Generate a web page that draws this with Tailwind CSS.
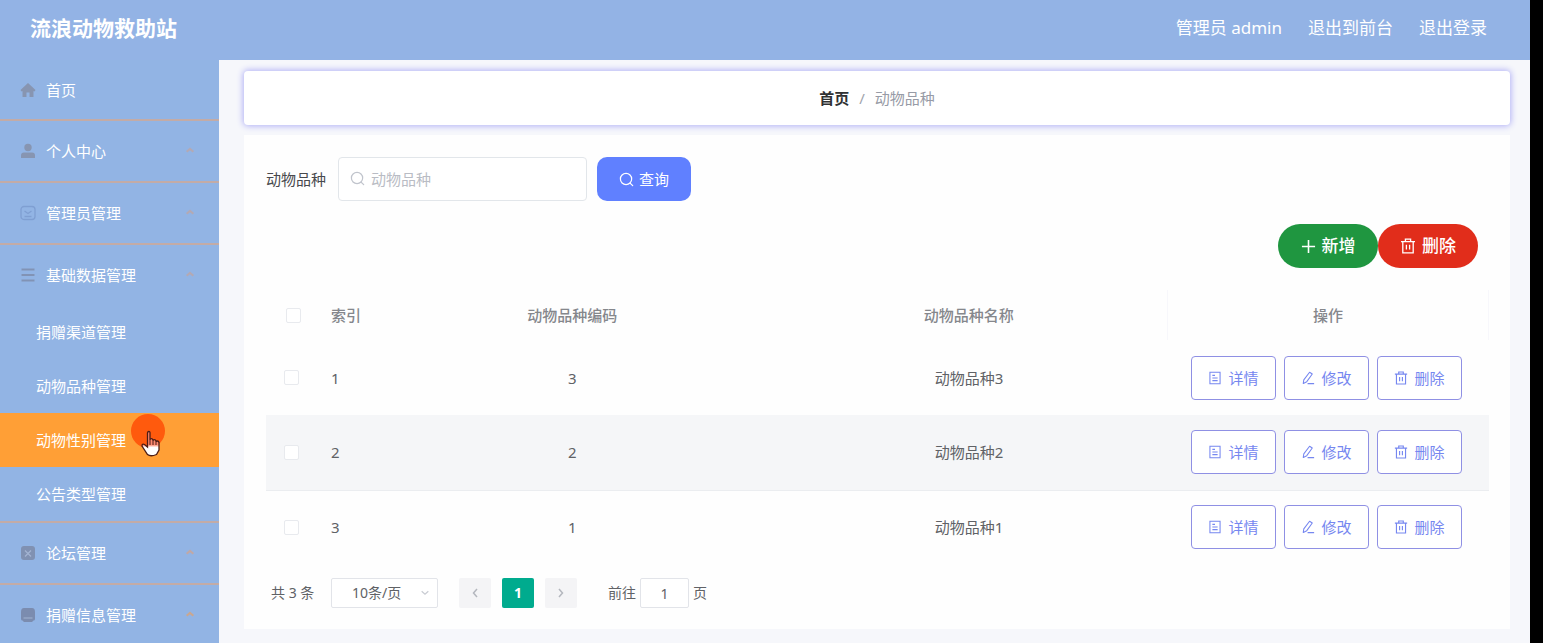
<!DOCTYPE html>
<html lang="zh-CN">
<head>
<meta charset="utf-8">
<title>流浪动物救助站</title>
<meta name="viewport" content="width=device-width, initial-scale=1">
<script src="https://cdn.jsdelivr.net/npm/@tailwindcss/browser@4"></script>
</head>
<body class="flex h-screen overflow-hidden bg-black pr-[13px] font-['Noto_Sans','Noto_Sans_CJK_SC',sans-serif] text-[15px] leading-6 text-[#606266]">

<svg class="hidden" aria-hidden="true">
  <symbol id="search" viewBox="0 0 16 16"><circle cx="7.5" cy="7.5" r="6" fill="none" stroke="currentColor" stroke-width="1.3"/><path d="M11.8 11.8 14.6 14.6" stroke="currentColor" stroke-width="1.3" stroke-linecap="round"/></symbol>
  <symbol id="plus" viewBox="0 0 16 16"><path d="M8 1v14M1 8h14" stroke="currentColor" stroke-width="1.7"/></symbol>
  <symbol id="trash" viewBox="0 0 16 16"><path d="M1 3.6h14M5.4 3.4V1.2h5.2v2.2M2.8 3.8v11h10.4v-11M6.4 6.8v4.8M9.6 6.8v4.8" fill="none" stroke="currentColor" stroke-width="1.3"/></symbol>
  <symbol id="doc" viewBox="0 0 16 16"><path d="M2.2 1.4h11.6v13.2H2.2zM5 5h3M5 8h6M5 11h6" fill="none" stroke="currentColor" stroke-width="1.2"/></symbol>
  <symbol id="edit" viewBox="0 0 16 16"><path d="M9.8 1.4 12.9 3.4 6.6 12.2 2.6 14.2 3.2 10.2zM7.5 14.4h7.5" fill="none" stroke="currentColor" stroke-width="1.2" stroke-linejoin="round"/></symbol>
  <symbol id="up" viewBox="0 0 12 12"><path d="M2 8 6 4.5 10 8" fill="none" stroke="currentColor" stroke-width="1.5"/></symbol>
  <symbol id="caret" viewBox="0 0 12 12"><path d="M2 7 6 3.500 10 7" fill="none" stroke="currentColor" stroke-width="2.500"/></symbol>
</svg>

<div class="flex min-w-0 flex-1 flex-col bg-[#f6f7fb]">
  <header class="flex h-[60px] shrink-0 items-center justify-between bg-[#93b3e5] pr-[43px] pb-1 pl-[30px] text-white">
    <h1 class="text-[21px] font-bold">流浪动物救助站</h1>
    <div class="flex items-center gap-[26px] text-[17px]">
      <span>管理员 admin</span>
      <a href="#">退出到前台</a>
      <a href="#">退出登录</a>
    </div>
  </header>

  <div class="flex min-h-0 flex-1">
    <nav class="w-[219px] shrink-0 overflow-hidden bg-[#92b4e4] text-white" aria-label="主菜单">
      <ul>
        <li class="border-b-2 border-[#c3aba6]">
          <a href="#" class="flex h-[59px] items-center gap-[10px] pl-5">
            <svg class="size-4 text-[#8795b1]" viewBox="0 0 16 16" fill="currentColor"><path d="M8 1 .5 8l1 1.500L2.500 9V15h4v-4.500h3V15h4V9l1 .5 1-1.500z"/></svg>首页</a>
        </li>
        <li class="border-b-2 border-[#c3aba6]">
          <a href="#" class="flex h-[60px] items-center gap-[10px] pl-5">
            <svg class="size-4 text-[#8795b1]" viewBox="0 0 16 16" fill="currentColor"><circle cx="8" cy="4.500" r="3.700"/><path d="M1 15v-2.500Q1 9.500 4 9.500h8q3 0 3 3V15z"/></svg>个人中心
            <svg class="mr-6 ml-auto size-[10px] text-[#b3a9b4]"><use href="#caret"/></svg></a>
        </li>
        <li class="border-b-2 border-[#c3aba6]">
          <a href="#" class="flex h-[60px] items-center gap-[10px] pl-5">
            <svg class="size-4 text-[#7f9fd2]" viewBox="0 0 16 16" fill="none" stroke="currentColor" stroke-width="1.300"><rect x="1" y="1.500" width="14" height="13" rx="3"/><path d="m4.500 6 3.500 2.500L11.500 6M4.500 11.500h7"/></svg>管理员管理
            <svg class="mr-6 ml-auto size-[10px] text-[#b3a9b4]"><use href="#caret"/></svg></a>
        </li>
        <li class="border-b-2 border-[#c3aba6]">
          <a href="#" class="flex h-[60px] items-center gap-[10px] pl-5">
            <svg class="size-4 text-[#8193b5]" viewBox="0 0 16 16" stroke="currentColor" stroke-width="1.800"><path d="M1.500 2.500h13M1.500 8h13M1.500 13.500h13"/></svg>基础数据管理
            <svg class="mr-6 ml-auto size-[10px] text-[#b3a9b4]"><use href="#caret"/></svg></a>
          <ul>
            <li><a href="#" class="flex h-[54px] items-center pl-9">捐赠渠道管理</a></li>
            <li><a href="#" class="flex h-[54px] items-center pl-9">动物品种管理</a></li>
            <li class="relative"><a href="#" class="flex h-[54px] items-center bg-[#ff9f36] pl-9">动物性别管理</a>
              <span class="absolute top-px left-[131px] size-[34px] rounded-full bg-[#ff5a0d]"></span>
              <svg class="absolute top-[17px] left-[140px] h-7 w-[22px]" viewBox="0 0 22 28"><defs><linearGradient id="skin" x1="0" y1="0" x2="0" y2="1"><stop offset=".55" stop-color="#ff8a70"/><stop offset=".65" stop-color="#fff"/></linearGradient></defs><path d="M7.500 14V3q0-1.500 1.300-1.500T10 3v7q0-1.300 1.300-1.300T13 10v1q0-1.300 1.300-1.300T16 11v1q0-1 1.300-1T19 12.500V20l-2.500 4.500q-6 2.500-9 0L2 16q0-2.500 2.500-1.500L7.500 17z" fill="url(#skin)" stroke="#4c1d16" stroke-width="1.300"/><path d="M10 10v5M13 11v4M16 12v3" stroke="#4c1d16"/></svg>
            </li>
            <li><a href="#" class="flex h-[54px] items-center pl-9">公告类型管理</a></li>
          </ul>
        </li>
        <li class="border-b-2 border-[#c3aba6]">
          <a href="#" class="flex h-[60px] items-center gap-[10px] pl-5">
            <svg class="size-4" viewBox="0 0 16 16"><rect x="1" y="1" width="14" height="14" rx="3" fill="#8091b2"/><path d="m5 5.500 6 6M11 5.500l-6 6" stroke="#a3b4d2" stroke-width="1.200"/></svg>论坛管理
            <svg class="mr-6 ml-auto size-[10px] text-[#c0a8a6]"><use href="#caret"/></svg></a>
        </li>
        <li class="border-b-2 border-[#c3aba6]">
          <a href="#" class="flex h-[60px] items-center gap-[10px] pl-5">
            <svg class="size-4" viewBox="0 0 16 16"><path d="M4 1h8q3 0 3 4v7q0 1.500-1.500 1.500L12 15H4l-1.500-1.500Q1 13.500 1 12V5q0-4 3-4z" fill="#7b8caf"/><path d="M3.500 11h9" stroke="#a3b4d2"/></svg>捐赠信息管理
            <svg class="mr-6 ml-auto size-[10px] text-[#c9a791]"><use href="#caret"/></svg></a>
        </li>
      </ul>
    </nav>

    <main class="flex min-w-0 flex-1 flex-col pt-[11px] pr-5 pb-[14px] pl-[25px]">
      <nav class="flex h-[54px] shrink-0 items-center justify-center gap-[10px] rounded-sm bg-white shadow-[0_0_6px_1px_#b0b0f6]" aria-label="面包屑">
        <a href="#" class="font-bold text-[#303133]">首页</a>
        <span class="text-[#a0a4ac]">/</span>
        <span class="text-[#979ba6]">动物品种</span>
      </nav>

      <section class="mt-[10px] flex flex-1 flex-col bg-[#fefefe] pt-[22px] pr-[21px] pl-[22px]">
        <form class="flex items-center">
          <label for="kind" class="mr-3 text-[#48494d]">动物品种</label>
          <div class="relative mr-[10px]">
            <input id="kind" type="text" placeholder="动物品种" class="h-11 w-[249px] rounded-sm border border-[#e2e6ea] bg-white pl-8 placeholder:text-[#b9bcc4]">
            <svg class="absolute top-[14px] left-3 size-[15px] text-[#c0c4cc]"><use href="#search"/></svg>
          </div>
          <button type="button" class="flex h-11 w-[94px] items-center justify-center gap-[5px] rounded-[10px] bg-[#6080ff] text-white"><svg class="size-[15px]"><use href="#search"/></svg>查询</button>
        </form>

        <div class="mt-[23px] flex justify-end pr-[11px] text-[17px] font-medium text-white">
          <button type="button" class="flex h-11 w-[100px] items-center justify-center gap-[6px] rounded-full bg-[#1f9640]"><svg class="size-[15px]"><use href="#plus"/></svg>新增</button>
          <button type="button" class="flex h-11 w-[100px] items-center justify-center gap-[6px] rounded-full bg-[#e12d1b]"><svg class="size-4"><use href="#trash"/></svg>删除</button>
        </div>

        <table class="mt-[22px] w-full table-fixed">
          <colgroup><col class="w-[55px]"><col class="w-[53px]"><col><col><col class="w-[321px]"></colgroup>
          <thead>
            <tr class="h-[50px] text-[#85878c]">
              <th class="pl-[20px] text-left"><input type="checkbox" aria-label="全选" class="block size-[15px] appearance-none rounded-xs border border-[#e8eaee] bg-white"></th>
              <th class="pl-[10px] text-left font-medium whitespace-nowrap">索引</th>
              <th class="font-medium">动物品种编码</th>
              <th class="font-medium">动物品种名称</th>
              <th class="border-x border-[#f7f7fb] font-medium">操作</th>
            </tr>
          </thead>
          <tbody class="text-center">
            <tr class="h-[75px]">
              <td class="pl-[18px]"><input type="checkbox" aria-label="选择 1" class="block size-[15px] appearance-none rounded-xs border border-[#e8eaee] bg-white"></td>
              <td class="pl-[10px] text-left">1</td><td>3</td><td>动物品种3</td>
              <td class="pr-[3px]"><div class="flex justify-center gap-2 text-[#7687f0]">
                <button type="button" class="flex h-11 w-[85px] items-center justify-center gap-[6px] rounded border border-[#8f90e4] bg-white"><svg class="size-[14px]"><use href="#doc"/></svg>详情</button>
                <button type="button" class="flex h-11 w-[85px] items-center justify-center gap-[6px] rounded border border-[#8f90e4] bg-white"><svg class="size-[14px]"><use href="#edit"/></svg>修改</button>
                <button type="button" class="flex h-11 w-[85px] items-center justify-center gap-[6px] rounded border border-[#8f90e4] bg-white"><svg class="size-[14px]"><use href="#trash"/></svg>删除</button>
              </div></td>
            </tr>
            <tr class="h-[75px] border-b border-[#ebedf0] bg-[#f5f6f8]">
              <td class="pl-[18px]"><input type="checkbox" aria-label="选择 2" class="block size-[15px] appearance-none rounded-xs border border-[#e8eaee] bg-white"></td>
              <td class="pl-[10px] text-left">2</td><td>2</td><td>动物品种2</td>
              <td class="pr-[3px]"><div class="flex justify-center gap-2 text-[#7687f0]">
                <button type="button" class="flex h-11 w-[85px] items-center justify-center gap-[6px] rounded border border-[#8f90e4] bg-white"><svg class="size-[14px]"><use href="#doc"/></svg>详情</button>
                <button type="button" class="flex h-11 w-[85px] items-center justify-center gap-[6px] rounded border border-[#8f90e4] bg-white"><svg class="size-[14px]"><use href="#edit"/></svg>修改</button>
                <button type="button" class="flex h-11 w-[85px] items-center justify-center gap-[6px] rounded border border-[#8f90e4] bg-white"><svg class="size-[14px]"><use href="#trash"/></svg>删除</button>
              </div></td>
            </tr>
            <tr class="h-[74px]">
              <td class="pl-[18px]"><input type="checkbox" aria-label="选择 3" class="block size-[15px] appearance-none rounded-xs border border-[#e8eaee] bg-white"></td>
              <td class="pl-[10px] text-left">3</td><td>1</td><td>动物品种1</td>
              <td class="pr-[3px]"><div class="flex justify-center gap-2 text-[#7687f0]">
                <button type="button" class="flex h-11 w-[85px] items-center justify-center gap-[6px] rounded border border-[#8f90e4] bg-white"><svg class="size-[14px]"><use href="#doc"/></svg>详情</button>
                <button type="button" class="flex h-11 w-[85px] items-center justify-center gap-[6px] rounded border border-[#8f90e4] bg-white"><svg class="size-[14px]"><use href="#edit"/></svg>修改</button>
                <button type="button" class="flex h-11 w-[85px] items-center justify-center gap-[6px] rounded border border-[#8f90e4] bg-white"><svg class="size-[14px]"><use href="#trash"/></svg>删除</button>
              </div></td>
            </tr>
          </tbody>
        </table>

        <div class="mt-[14px] flex items-center pl-[5px] text-[14px]">
          <span class="w-[60px]">共 3 条</span>
          <div class="relative mr-[21px]">
            <select aria-label="每页条数" class="h-[30px] w-[107px] appearance-none rounded-xs border border-[#e2e4e9] bg-white pl-5"><option>10条/页</option></select>
            <svg class="pointer-events-none absolute top-[10px] right-2 size-[10px] rotate-180 text-[#c9ccd3]"><use href="#up"/></svg>
          </div>
          <button type="button" aria-label="上一页" class="mr-[11px] flex h-[30px] w-8 items-center justify-center rounded-xs bg-[#f4f4f6] text-[#b4b7be]"><svg class="size-3 -rotate-90"><use href="#up"/></svg></button>
          <button type="button" class="mr-[11px] h-[30px] w-8 rounded-xs bg-[#00ab8e] font-bold text-white">1</button>
          <button type="button" aria-label="下一页" class="mr-[31px] flex h-[30px] w-8 items-center justify-center rounded-xs bg-[#f4f4f6] text-[#b4b7be]"><svg class="size-3 rotate-90"><use href="#up"/></svg></button>
          <label class="flex items-center gap-1">前往<input type="text" value="1" class="h-[30px] w-[49px] rounded-xs border border-[#e2e4e9] bg-white text-center">页</label>
        </div>
      </section>
    </main>
  </div>
</div>
</body>
</html>
